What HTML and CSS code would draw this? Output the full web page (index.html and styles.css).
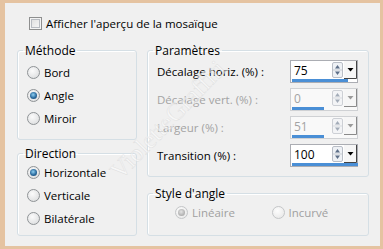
FILE: index.html
```html
<!DOCTYPE html>
<html lang="fr">
<head>
  <meta charset="UTF-8">
  <title>Mosaïque</title>
  <link rel="stylesheet" href="styles.css">
</head>
<body>
<div class="dialog">
  <!-- aperçu -->
  <div class="check-row"><span class="checkbox"></span>Afficher l'aperçu de la mosaïque</div>

  <div class="columns">
    <div class="col col-left">
      <fieldset class="group group-method">
        <legend>Méthode</legend>
        <div class="group-body">
          <div class="option"><span class="radio"></span>Bord</div>
          <div class="option"><span class="radio checked"></span>Angle</div>
          <div class="option"><span class="radio"></span>Miroir</div>
        </div>
      </fieldset>
      <fieldset class="group group-direction">
        <legend>Direction</legend>
        <div class="group-body">
          <div class="option"><span class="radio checked"></span>Horizontale</div>
          <div class="option"><span class="radio"></span>Verticale</div>
          <div class="option"><span class="radio"></span>Bilatérale</div>
        </div>
      </fieldset>
    </div>

    <div class="col col-right">
      <fieldset class="group group-params">
        <legend>Paramètres</legend>
        <div class="group-body">
          <div class="field">
            <span class="field-label">Décalage horiz. (%) :</span>
            <div class="spin">
              <span class="spin-value">75</span>
              <svg class="spin-arrows" width="11" height="16" viewBox="0 0 11 16"><rect x="0.5" y="0.5" width="10" height="15" rx="1.5" fill="#eef1f5" stroke="#b9bec6"/><line x1="1" y1="8" x2="10" y2="8" stroke="#c9cdd3"/><path d="M3 6.5 L5.5 3 L8 6.5Z" fill="#5d6f88"/><path d="M3 9.5 L5.5 13 L8 9.5Z" fill="#5d6f88"/></svg>
              <svg class="spin-drop" width="13" height="18" viewBox="0 0 13 18"><rect x="0" y="0" width="13" height="18" fill="#f6f6f6"/><path d="M12.5 0 V17.5 H0" fill="none" stroke="#444"/><path d="M3.5 7 H9.5 L6.5 10.5Z" fill="#000"/></svg>
              <span class="spin-bar" style="width:56px"></span>
            </div>
          </div>
          <div class="field disabled">
            <span class="field-label">Décalage vert. (%) :</span>
            <div class="spin">
              <span class="spin-value">0</span>
              <svg class="spin-arrows" width="11" height="16" viewBox="0 0 11 16"><rect x="0.5" y="0.5" width="10" height="15" rx="1.5" fill="#f3f4f6" stroke="#cdd0d5"/><line x1="1" y1="8" x2="10" y2="8" stroke="#d8dbdf"/><path d="M3 6.5 L5.5 3 L8 6.5Z" fill="#a3acb8"/><path d="M3 9.5 L5.5 13 L8 9.5Z" fill="#a3acb8"/></svg>
              <svg class="spin-drop" width="13" height="18" viewBox="0 0 13 18"><rect x="0" y="0" width="13" height="18" fill="#f6f6f6"/><path d="M12.5 0 V17.5 H0" fill="none" stroke="#8a8a8a"/><path d="M3.5 7 H9.5 L6.5 10.5Z" fill="#9a9a9a"/></svg>
              <span class="spin-bar" style="width:32px"></span>
            </div>
          </div>
          <div class="field disabled">
            <span class="field-label">Largeur (%) :</span>
            <div class="spin">
              <span class="spin-value">51</span>
              <svg class="spin-arrows" width="11" height="16" viewBox="0 0 11 16"><rect x="0.5" y="0.5" width="10" height="15" rx="1.5" fill="#f3f4f6" stroke="#cdd0d5"/><line x1="1" y1="8" x2="10" y2="8" stroke="#d8dbdf"/><path d="M3 6.5 L5.5 3 L8 6.5Z" fill="#a3acb8"/><path d="M3 9.5 L5.5 13 L8 9.5Z" fill="#a3acb8"/></svg>
              <svg class="spin-drop" width="13" height="18" viewBox="0 0 13 18"><rect x="0" y="0" width="13" height="18" fill="#f6f6f6"/><path d="M12.5 0 V17.5 H0" fill="none" stroke="#8a8a8a"/><path d="M3.5 7 H9.5 L6.5 10.5Z" fill="#9a9a9a"/></svg>
              <span class="spin-bar" style="width:32px"></span>
            </div>
          </div>
          <div class="field">
            <span class="field-label">Transition (%) :</span>
            <div class="spin">
              <span class="spin-value">100</span>
              <svg class="spin-arrows" width="11" height="16" viewBox="0 0 11 16"><rect x="0.5" y="0.5" width="10" height="15" rx="1.5" fill="#eef1f5" stroke="#b9bec6"/><line x1="1" y1="8" x2="10" y2="8" stroke="#c9cdd3"/><path d="M3 6.5 L5.5 3 L8 6.5Z" fill="#5d6f88"/><path d="M3 9.5 L5.5 13 L8 9.5Z" fill="#5d6f88"/></svg>
              <svg class="spin-drop" width="13" height="18" viewBox="0 0 13 18"><rect x="0" y="0" width="13" height="18" fill="#f6f6f6"/><path d="M12.5 0 V17.5 H0" fill="none" stroke="#444"/><path d="M3.5 7 H9.5 L6.5 10.5Z" fill="#000"/></svg>
              <span class="spin-bar" style="width:66px"></span>
            </div>
          </div>
        </div>
      </fieldset>
      <fieldset class="group group-style">
        <legend>Style d'angle</legend>
        <div class="group-body">
          <div class="option disabled"><span class="radio checked"></span>Linéaire</div>
          <div class="option disabled"><span class="radio"></span>Incurvé</div>
        </div>
      </fieldset>
    </div>
  </div>

  <div class="watermark">VioletteGraffiti</div>
</div>
</body>
</html>
```

FILE: styles.css
```css
body {
  margin: 0;
  font-family: "Open Sans", "Noto Sans", sans-serif;
  font-size: 11.5px;
  color: #000;
}
.dialog {
  position: relative;
  width: 383px;
  height: 249px;
  box-sizing: border-box;
  border-style: solid;
  border-color: #e5c3a1;
  border-width: 3px 3px 3px 5px;
  background: #f0f0f0;
  padding: 12px 11px 0 12px;
  overflow: hidden;
}
.check-row {
  display: flex;
  align-items: center;
  height: 16px;
  padding-left: 12px;
}
.checkbox {
  width: 11px;
  height: 11px;
  border: 1px solid #8e8f8f;
  background: linear-gradient(135deg, #dcdcdc, #fafafa);
  box-shadow: inset 0 0 0 1px #f4f4f4, inset 0 0 0 2px #b8bcc2;
  margin-right: 4px;
}
.columns {
  display: flex;
  gap: 10px;
  margin-top: 12px;
  height: 193px;
}
.col {
  display: flex;
  flex-direction: column;
  justify-content: space-between;
}
.col-left { width: 120px; }
.col-right { width: 222px; }

.group {
  margin: 0;
  padding: 0;
  border: 1px solid #d5dfe5;
  border-radius: 3px;
  box-shadow: inset 1px 1px 0 #fff;
  box-sizing: border-box;
  min-width: 0;
}
.group legend {
  padding: 0 2px;
  margin-left: 5px;
  line-height: 15px;
  font-size: 12px;
}
.group-method { height: 97px; }
.group-direction { height: 90px; }
.group-params { height: 134px; }
.group-style { height: 50px; }

.group-method .group-body { padding: 3px 0 0 9px; }
.group-direction .group-body { padding: 0 0 0 9px; }
.group-params .group-body { padding: 2px 10px 0 9px; }
.group-style .group-body { padding: 0 0 0 27px; display: flex; }

.option {
  display: flex;
  align-items: center;
  height: 23px;
}
.group-style .option { width: 97px; }
.option.disabled { color: #a0a0a0; }

.radio {
  position: relative;
  width: 11px;
  height: 11px;
  border: 1px solid #8f9396;
  border-radius: 50%;
  background: radial-gradient(circle at 40% 35%, #fbfbfb, #e2e3e4 70%, #cfd1d3);
  margin-right: 4px;
}
.radio.checked::after {
  content: "";
  position: absolute;
  left: 2px;
  top: 2px;
  width: 7px;
  height: 7px;
  border-radius: 50%;
  background: radial-gradient(circle at 45% 40%, #8fd0f2, #2a6a9e 55%, #123f66);
}
.option.disabled .radio {
  border-color: #c4c6c8;
  background: radial-gradient(circle at 40% 35%, #fdfdfd, #ececec 70%, #e0e0e0);
}
.option.disabled .radio.checked::after {
  background: radial-gradient(circle at 45% 40%, #e4e4e4, #b5b5b5 60%, #9c9c9c);
}

.field {
  display: flex;
  align-items: center;
  height: 23px;
  margin-bottom: 5px;
}
.field-label { flex: 1; }
.field.disabled { color: #a3a3a3; }

.spin {
  position: relative;
  width: 66px;
  height: 21px;
  border: 1px solid #abadb3;
  background: #fff;
}
.field.disabled .spin {
  border-color: #cfd1d4;
  background: #f9f9f9;
}
.spin-value {
  position: absolute;
  left: 3px;
  top: 2px;
  line-height: 15px;
  font-size: 12px;
}
.spin-arrows {
  position: absolute;
  right: 14px;
  top: 1px;
}
.spin-drop {
  position: absolute;
  right: 0;
  top: 0;
}
.spin-bar {
  position: absolute;
  left: 1px;
  bottom: 0;
  height: 3px;
  background: #4a8fd6;
}

.watermark {
  position: absolute;
  left: 68px;
  top: 105px;
  width: 190px;
  line-height: 24px;
  text-align: center;
  font-family: "Liberation Serif", serif;
  font-size: 25px;
  color: rgba(255, 255, 255, 0.5);
  -webkit-text-stroke: 0.4px #dcdcdc;
  transform: rotate(-46deg);
  pointer-events: none;
}
```
